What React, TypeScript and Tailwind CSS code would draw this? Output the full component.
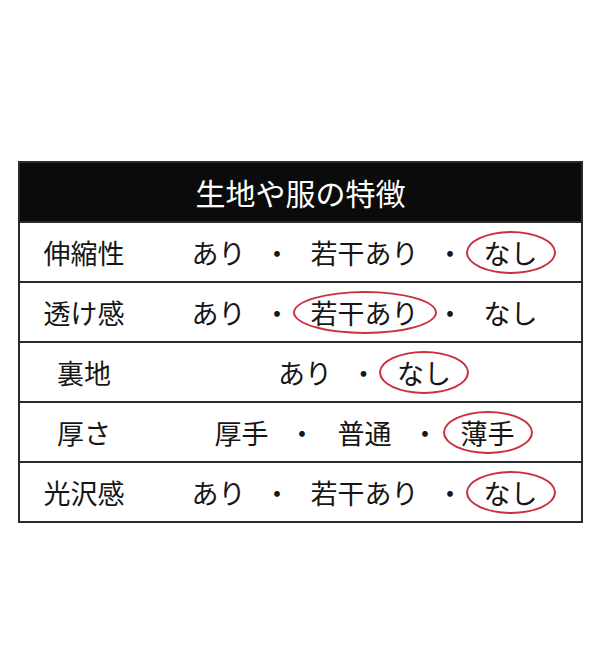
import React from 'react';

type Row = { label: string; options: string[]; picked: number; wide?: boolean };

const rows: Row[] = [
    { label: '伸縮性', options: ['あり', '若干あり', 'なし'], picked: 2 },
    { label: '透け感', options: ['あり', '若干あり', 'なし'], picked: 1 },
    { label: '裏地', options: ['あり', 'なし'], picked: 1 },
    { label: '厚さ', options: ['厚手', '普通', '薄手'], picked: 2, wide: true },
    { label: '光沢感', options: ['あり', '若干あり', 'なし'], picked: 2 },
];

const font = { fontFamily: '"Noto Sans CJK JP", "Noto Sans", sans-serif' };

export default function App() {
    return (
        <div className="w-[600px] h-[661px] bg-white pt-[161px] pl-[18px]" style={font}>
            <div className="w-[565px] border-2 border-[#2b2b2b] text-[#161616]">
                <div className="h-[58px] bg-[#0b0b0b] text-white text-[30px] flex items-center justify-center leading-none">
                    生地や服の特徴
                </div>
                {rows.map((row, i) => (
                    <div key={i} className="h-[60px] border-t-2 border-[#2b2b2b] flex items-center text-[27px] leading-none">
                        <div className="w-[128px] text-center">{row.label}</div>
                        <div className="flex-1 flex items-center justify-center">
                            {row.options.map((opt, j) => (
                                <React.Fragment key={j}>
                                    {j > 0 && (
                                        <span className={row.wide ? 'ml-[20px] mr-[22px]' : 'ml-[18px] mr-[20px]'}>・</span>
                                    )}
                                    <span className="relative">
                                        {opt}
                                        {j === row.picked && (
                                            <span className="absolute -left-[18px] -right-[18px] -top-[8px] -bottom-[8px] rounded-[50%] border-2 border-[#c9323d]" />
                                        )}
                                    </span>
                                </React.Fragment>
                            ))}
                        </div>
                    </div>
                ))}
            </div>
        </div>
    );
}
